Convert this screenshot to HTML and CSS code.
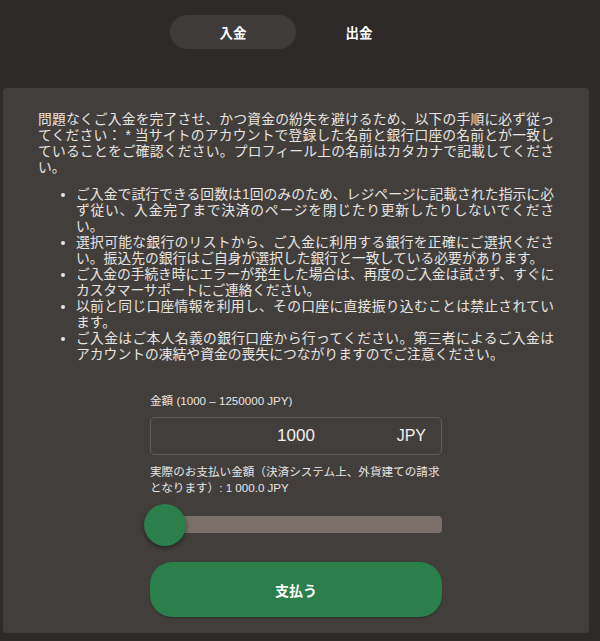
FILE: index.html
```html
<!DOCTYPE html>
<html lang="ja">
<head>
<meta charset="utf-8">
<title>入金</title>
<link rel="stylesheet" href="styles.css">
</head>
<body>
<div class="page">
  <nav class="tabs">
    <button class="tab tab-active">入金</button>
    <button class="tab">出金</button>
  </nav>
  <section class="panel">
    <p class="intro">問題なくご入金を完了させ、かつ資金の紛失を避けるため、以下の手順に必ず従ってください： * 当サイトのアカウントで登録した名前と銀行口座の名前とが一致していることをご確認ください。プロフィール上の名前はカタカナで記載してください。</p>
    <ul class="rules">
      <li>ご入金で試行できる回数は1回のみのため、レジページに記載された指示に必ず従い、入金完了まで決済のページを閉じたり更新したりしないでください。</li>
      <li>選択可能な銀行のリストから、ご入金に利用する銀行を正確にご選択ください。振込先の銀行はご自身が選択した銀行と一致している必要があります。</li>
      <li class="rule-tight">ご入金の手続き時にエラーが発生した場合は、再度のご入金は試さず、すぐにカスタマーサポートにご連絡ください。</li>
      <li>以前と同じ口座情報を利用し、その口座に直接振り込むことは禁止されています。</li>
      <li>ご入金はご本人名義の銀行口座から行ってください。第三者によるご入金はアカウントの凍結や資金の喪失につながりますのでご注意ください。</li>
    </ul>
    <form class="form">
      <div class="label">金額 (1000 – 1250000 JPY)</div>
      <div class="amount">
        <span class="amount-value">1000</span>
        <span class="amount-cur">JPY</span>
      </div>
      <div class="note">実際のお支払い金額（決済システム上、外貨建ての請求となります）: 1 000.0 JPY</div>
      <div class="slider">
        <div class="track"></div>
        <div class="thumb"></div>
      </div>
      <button type="button" class="pay">支払う</button>
    </form>
  </section>
</div>
</body>
</html>
```

FILE: styles.css
```css
html, body {
  margin: 0;
  padding: 0;
}

body {
  background: #2e2a29;
  color: #e7e5e2;
  font-family: "Liberation Sans", "Noto Sans CJK JP", sans-serif;
}

.page {
  width: 600px;
  height: 641px;
  box-sizing: border-box;
  padding: 15px 11px 8px 3px;
}

.tabs {
  display: flex;
  justify-content: center;
  margin-bottom: 39px;
}

.tab {
  width: 126px;
  height: 34px;
  border: none;
  border-radius: 17px;
  background: transparent;
  color: #ffffff;
  font-family: "Liberation Sans", "Noto Sans CJK JP", sans-serif;
  font-size: 13.5px;
  font-weight: 700;
  padding: 0;
}

.tab-active {
  background: #3f3b3a;
}

.panel {
  background: #423e3c;
  border-radius: 4px;
  padding: 24px 35px 16px 35px;
}

.intro {
  margin: 0;
  font-size: 13.8px;
  line-height: 16px;
  text-align: justify;
}

.rules {
  margin: 11px 0 0;
  padding-left: 38px;
  font-size: 13.8px;
  line-height: 16px;
  text-align: justify;
}

.rule-tight {
  letter-spacing: -0.2px;
}

.form {
  width: 292px;
  margin: 30px auto 0;
}

.label {
  font-size: 11.6px;
  line-height: 16px;
  margin-bottom: 8px;
}

.amount {
  height: 38px;
  box-sizing: border-box;
  border: 1px solid #635d59;
  border-radius: 5px;
  display: grid;
  grid-template-columns: 1fr auto 1fr;
  align-items: center;
}

.amount-value {
  grid-column: 2;
  font-size: 17px;
  color: #f2f0ed;
}

.amount-cur {
  grid-column: 3;
  justify-self: end;
  padding-right: 15px;
  font-size: 16px;
  color: #f2f0ed;
}

.note {
  margin-top: 9px;
  font-size: 11.6px;
  line-height: 16px;
}

.slider {
  position: relative;
  height: 42px;
  margin-top: 7.5px;
  display: flex;
  align-items: center;
}

.track {
  width: 100%;
  height: 17px;
  border-radius: 4px;
  background: #7a6f69;
}

.thumb {
  position: absolute;
  left: -6px;
  top: 0;
  width: 42px;
  height: 42px;
  border-radius: 50%;
  background: #2a7f4b;
  box-shadow: 0 2px 4px rgba(0, 0, 0, 0.45);
}

.pay {
  display: block;
  width: 100%;
  height: 55px;
  margin-top: 16.5px;
  border: none;
  border-radius: 22px;
  background: #2a7f4b;
  color: #ffffff;
  font-family: "Liberation Sans", "Noto Sans CJK JP", sans-serif;
  font-size: 14px;
  font-weight: 700;
  box-shadow: 0 1px 2px rgba(0, 0, 0, 0.3);
}
```
